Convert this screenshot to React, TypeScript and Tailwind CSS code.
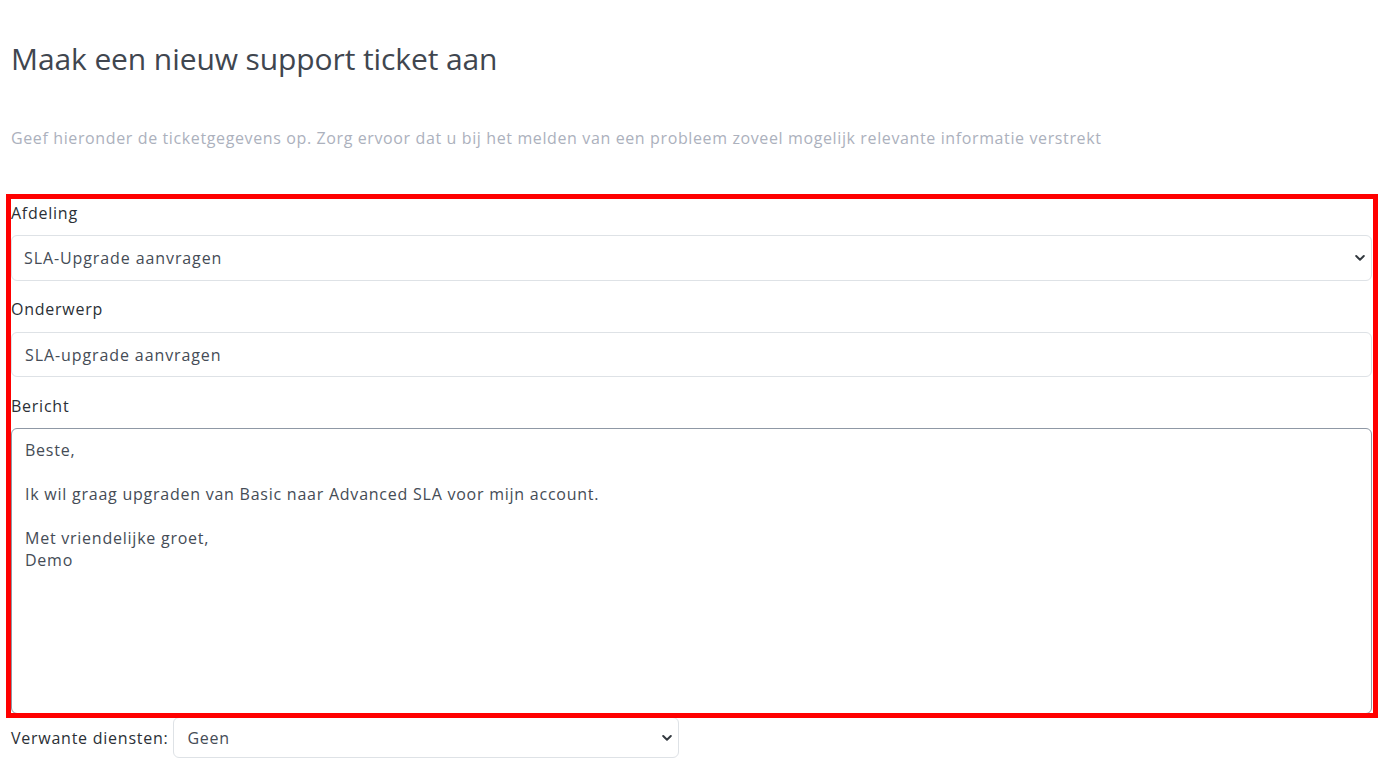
import React from "react";

function Chevron() {
  return (
    <svg width="10" height="7" viewBox="0 0 10 7" className="pointer-events-none absolute right-[7px] top-1/2 -translate-y-1/2">
      <path d="M1.2 1.5 L5 5.2 L8.8 1.5" fill="none" stroke="#343a40" strokeWidth="2" strokeLinecap="round" strokeLinejoin="round" />
    </svg>
  );
}

export default function App() {
  const msg = "Beste,\n\nIk wil graag upgraden van Basic naar Advanced SLA voor mijn account.\n\nMet vriendelijke groet,\nDemo";
  return (
    <div className="relative min-h-screen bg-white pl-[11px] pr-[16px] text-[16px] tracking-[0.75px] text-[#2b3036]" style={{ fontFamily: '"Open Sans", sans-serif' }}>
      <h1 className="pt-[41px] text-[30px] leading-[36px] font-normal tracking-[-0.1px] text-[#40464f]">Maak een nieuw support ticket aan</h1>
      <p className="mt-[49px] text-[16px] leading-[24px] tracking-[0.62px] text-[#acb1bd]">
        Geef hieronder de ticketgegevens op. Zorg ervoor dat u bij het melden van een probleem zoveel mogelijk relevante informatie verstrekt
      </p>

      <div className="mt-[51px]">
        <label className="block leading-[24px] text-[#2b3036]">Afdeling</label>
        <div className="relative mt-[10px]">
          <select defaultValue="sla" className="block h-[46px] w-full appearance-none rounded-[6px] border border-[#dee2e6] bg-white pl-[12px] pr-[30px] text-[16px] tracking-[0.9px] text-[#454c56] outline-none">
            <option value="sla">SLA-Upgrade aanvragen</option>
          </select>
          <Chevron />
        </div>

        <label className="mt-[16px] block leading-[24px] text-[#2b3036]">Onderwerp</label>
        <input
          readOnly
          value="SLA-upgrade aanvragen"
          className="mt-[11px] block h-[45px] w-full rounded-[6px] border border-[#dee2e6] bg-white pl-[13px] text-[16px] tracking-[0.9px] text-[#454c56] outline-none"
        />

        <label className="mt-[17px] block leading-[24px] text-[#2b3036]">Bericht</label>
        <textarea
          readOnly
          value={msg}
          className="mt-[10px] block h-[286px] w-full resize-none rounded-[6px] border border-[#8f98a5] bg-white px-[13px] pt-[10px] text-[16px] leading-[22px] tracking-[0.76px] text-[#454c56] outline-none"
        />
      </div>

      <div className="mt-[3px] flex items-center">
        <span className="text-[16px] text-[#2b3036]">Verwante diensten:</span>
        <div className="relative ml-[5px] w-[506px]">
          <select defaultValue="geen" className="block h-[41px] w-full appearance-none rounded-[6px] border border-[#dee2e6] bg-white pl-[13px] pr-[30px] text-[16px] text-[#454c56] outline-none">
            <option value="geen">Geen</option>
          </select>
          <Chevron />
        </div>
      </div>

      <div className="pointer-events-none absolute left-[6px] top-[194px] h-[524px] w-[1372px] border-[5px] border-[#ff0000]" />
    </div>
  );
}
